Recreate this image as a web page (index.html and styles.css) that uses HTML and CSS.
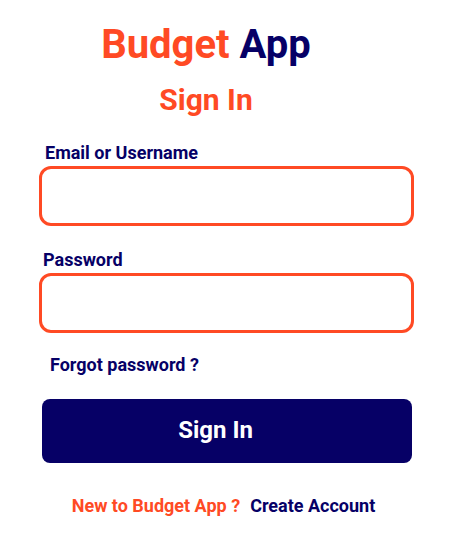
FILE: index.html
```html
<!DOCTYPE html>
<html>
<head>
<meta charset="utf-8">
<link rel="stylesheet" href="styles.css">
</head>
<body>
<main class="page">
  <header class="brand">
    <h1 class="title"><span class="t-orange">Budget</span> <span class="t-navy">App</span></h1>
    <h2 class="subtitle">Sign In</h2>
  </header>
  <form class="form">
    <label class="label label-email">Email or Username</label>
    <input class="field field-email" type="text">
    <label class="label label-pass">Password</label>
    <input class="field field-pass" type="password">
    <a class="forgot">Forgot password ?</a>
    <button class="btn" type="button">Sign In</button>
    <p class="footer"><span class="t-orange">New to Budget App ?</span><span class="t-navy create">Create Account</span></p>
  </form>
</main>
</body>
</html>
```
FILE: styles.css
```css
* { box-sizing: border-box; }
body {
  margin: 0;
  background: #fff;
  font-family: Roboto, "Noto Sans", sans-serif;
  font-weight: 700;
}
.page {
  width: 375px;
  margin-left: 39px;
  padding-top: 21px;
}
.brand {
  display: flex;
  flex-direction: column;
  align-items: center;
  padding-right: 41px;
}
.title {
  margin: 0;
  font-size: 40px;
  line-height: 48px;
  font-weight: 700;
}
.subtitle {
  margin: 13px 0 0;
  font-size: 30px;
  line-height: 36px;
  font-weight: 700;
  color: #FF4A24;
}
.t-orange { color: #FF4A24; }
.t-navy { color: #060066; }
.form {
  display: flex;
  flex-direction: column;
  margin-top: 24px;
}
.label {
  color: #060066;
  font-size: 18px;
  line-height: 22px;
}
.label-email { padding-left: 6px; }
.label-pass { padding-left: 4px; margin-top: 23px; }
.field {
  height: 60px;
  width: 375px;
  border: 3px solid #FF4A24;
  border-radius: 12px;
  background: #fff;
  outline: none;
  font: inherit;
}
.field-email { margin-top: 2px; }
.field-pass { margin-top: 2px; }
.forgot {
  margin-top: 21px;
  padding-left: 11px;
  color: #060066;
  font-size: 18px;
  line-height: 22px;
}
.btn {
  margin: 23px 0 0 3px;
  padding: 0 23px 2px 0;
  width: 370px;
  height: 64px;
  border: 0;
  border-radius: 8px;
  background: #060066;
  color: #fff;
  font-family: inherit;
  font-weight: 700;
  font-size: 24px;
  cursor: pointer;
}
.footer {
  margin: 32px 0 0;
  padding-right: 6px;
  text-align: center;
  font-size: 18px;
  line-height: 22px;
}
.create { margin-left: 10px; }
```
